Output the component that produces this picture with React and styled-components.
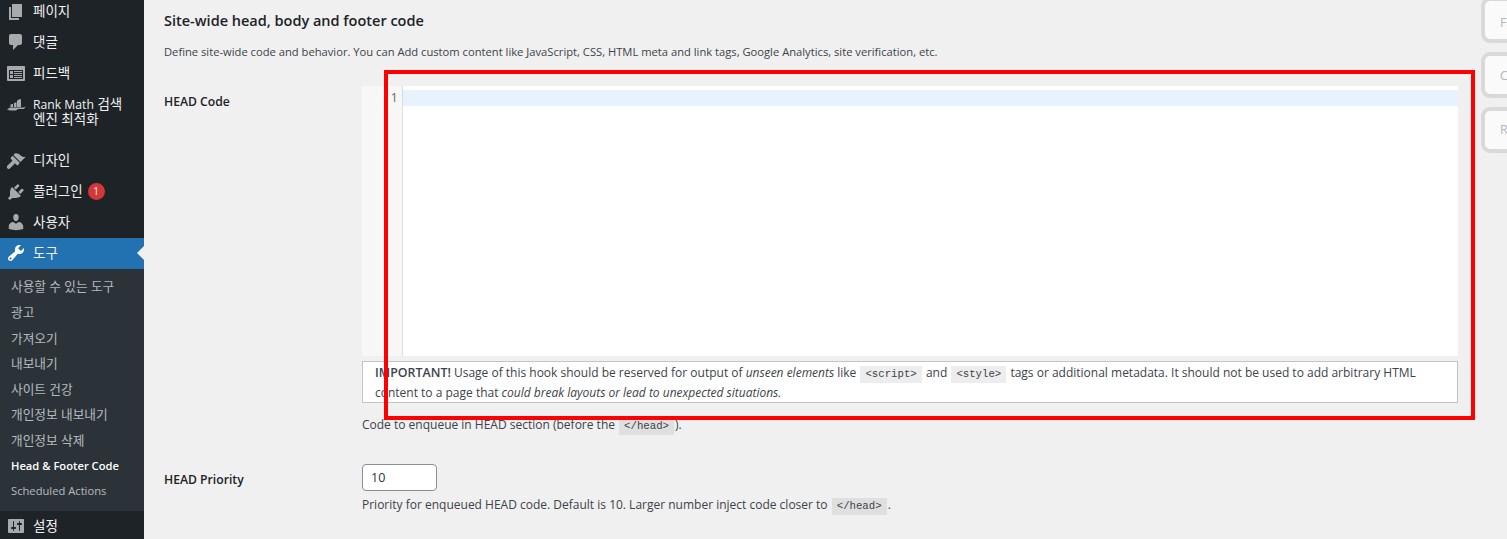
import React from 'react';
import styled, { createGlobalStyle } from 'styled-components';

const GlobalStyle = createGlobalStyle`
    html, body {
        margin: 0;
        padding: 0;
        height: 100%;
        overflow: hidden;
        background: #f0f0f0;
    }
    body {
        font-family: "Open Sans", "Noto Sans CJK KR", sans-serif;
        font-size: 12px;
        color: #3c434a;
    }
`;

const Page = styled.div`
    position: relative;
    display: flex;
    width: 1507px;
    height: 539px;
    overflow: hidden;
`;

const Sidebar = styled.nav`
    flex: 0 0 144px;
    background: #1d2327;
    margin-top: -3.8px;
    height: 544px;
`;

const MenuItem = styled.div`
    position: relative;
    display: flex;
    align-items: ${props => props.tall ? 'flex-start' : 'center'};
    height: ${props => props.tall ? '56.8px' : '30.8px'};
    padding-top: ${props => props.tall ? '8px' : '0'};
    box-sizing: border-box;
    background: ${props => props.active ? '#2271b1' : 'transparent'};
    color: #f0f0f1;
    font-size: 13.5px;
    line-height: 15px;

    svg {
        flex: 0 0 20px;
        width: 20px;
        height: 20px;
        margin-left: 6px;
        margin-right: 7px;
        fill: ${props => props.active ? '#fff' : '#a7aaad'};
    }
`;

const LatinText = styled.span`
    font-size: 12.2px;
`;

const ActiveArrow = styled.span`
    position: absolute;
    right: 0;
    top: 8px;
    border: 7px solid transparent;
    border-left-width: 0;
    border-right-color: #f0f0f0;
`;

const Badge = styled.span`
    display: inline-flex;
    align-items: center;
    justify-content: center;
    width: 17px;
    height: 17px;
    margin-left: 5px;
    border-radius: 50%;
    background: #d63638;
    color: #fff;
    font-size: 10px;
`;

const SubMenu = styled.div`
    background: #2c3338;
    padding: 4.5px 0 7.5px;
`;

const SubItem = styled.div`
    display: flex;
    align-items: center;
    height: 25.6px;
    padding-left: 11px;
    font-size: ${props => props.latin ? '11.2px' : '12.7px'};
    font-weight: ${props => props.current ? 600 : 400};
    color: ${props => props.current ? '#fff' : 'rgba(240, 246, 252, 0.7)'};
    white-space: nowrap;
`;

const Content = styled.main`
    flex: 0 0 1294px;
    margin-left: 20px;
`;

const Heading = styled.h2`
    margin: 11px 0 0;
    font-size: 14.5px;
    line-height: 20px;
    font-weight: 600;
    color: #1d2327;
`;

const Description = styled.p`
    margin: 13px 0 0;
    font-size: 11.2px;
    line-height: 16px;
`;

const FormRow = styled.div`
    display: grid;
    grid-template-columns: 198px 1fr;
    margin-top: ${props => props.gap}px;
`;

const Label = styled.label`
    padding-top: 8px;
    font-size: 12.2px;
    line-height: 16px;
    font-weight: 600;
    color: #1d2327;
`;

const Editor = styled.div`
    display: flex;
    height: 270px;
    background: #fff;
`;

const Gutter = styled.div`
    flex: 0 0 41px;
    box-sizing: border-box;
    padding: 3px 4px 0 0;
    background: #f7f7f7;
    border-right: 1px solid #ddd;
    text-align: right;
    font-size: 13px;
    line-height: 16px;
    color: #6d6d6d;
`;

const Lines = styled.div`
    flex: 1;
    padding-top: 4px;
`;

const ActiveLine = styled.div`
    height: 16px;
    background: #e8f2fe;
`;

const Notice = styled.div`
    box-sizing: border-box;
    height: 42px;
    margin-top: 5px;
    padding: 1px 12px 0;
    background: #fff;
    border: 1.5px solid #c3c4c7;
    font-size: 12px;
    line-height: 19px;
`;

const Strong = styled.strong`
    font-size: 12.4px;
    font-weight: 600;
`;

const Code = styled.code`
    display: inline-block;
    padding: 0 5px;
    margin: 0 1px;
    background: rgba(0, 0, 0, 0.07);
    font-family: "Liberation Mono", monospace;
    font-size: 10.7px;
    line-height: 17px;
    vertical-align: baseline;
`;

const Hint = styled.p`
    margin: ${props => props.gap}px 0 0;
    font-size: 12px;
    line-height: 18px;
`;

const NumberField = styled.input`
    display: block;
    box-sizing: border-box;
    width: 75px;
    height: 27px;
    padding: 0 8px;
    background: #fff;
    border: 1px solid #8c8f94;
    border-radius: 4px;
    font-family: "Open Sans", sans-serif;
    font-size: 12.5px;
    color: #2c3338;
`;

const SideTabs = styled.aside`
    display: flex;
    flex-direction: column;
    flex: none;
    gap: 9px;
    margin: -3px 0 0 23px;
`;

const SideTab = styled.div`
    box-sizing: border-box;
    width: 90px;
    height: 46px;
    padding: ${props => props.pad}px 0 0 15px;
    background: #fafafa;
    border: 4px solid #d9d9d9;
    border-radius: 9px;
    font-size: 12.5px;
    line-height: 20px;
    color: #b5b5b5;
`;

const Highlight = styled.div`
    position: absolute;
    left: 384px;
    top: 70px;
    width: 1091px;
    height: 350px;
    box-sizing: border-box;
    border: 4px solid #ff0000;
    pointer-events: none;
`;

const PageIcon = () => (
    <svg viewBox="0 0 20 20"><path d="M6 15V2h10v13H6zm-1 1h8v2H3V5h2v11z" /></svg>
);

const CommentIcon = () => (
    <svg viewBox="0 0 20 20"><path d="M5 2h9c1.1 0 2 .9 2 2v7c0 1.1-.9 2-2 2h-2l-5 5v-5H5c-1.1 0-2-.9-2-2V4c0-1.1.9-2 2-2z" /></svg>
);

const FeedbackIcon = () => (
    <svg viewBox="0 0 20 20"><path fillRule="evenodd" d="M2 3h16c.55 0 1 .45 1 1v13c0 .55-.45 1-1 1H2c-.55 0-1-.45-1-1V4c0-.55.45-1 1-1zm15 13V7H3v9h14zM4 8v3h3V8H4zm4 0v1h8V8H8zm0 2v1h8v-1H8zm-4 2v3h3v-3H4zm4 0v1h8v-1H8zm0 2v1h8v-1H8z" /></svg>
);

const RankMathIcon = () => (
    <svg viewBox="0 0 20 20"><path d="M1 12.500l3-2h13.500l2-1-1.500 2.500h-6l-2 1.500H4zM4.500 10V7.500L7 6.700V10zM8 10V6l2.500-.8V10zM11 10V3.500L14 2l1 .5V10z" /></svg>
);

const BrushIcon = () => (
    <svg viewBox="0 0 20 20"><path d="M14.48 11.06L7.41 3.99l1.5-1.5c.5-.56 2.3-.47 3.51.32 1.21.8 1.43 1.28 2.91 2.1 1.18.64 2.45 1.26 4.45.85zm-.71.71L6.7 4.7 4.93 6.47c-.39.39-.39 1.02 0 1.41l1.06 1.06c.39.39.39 1.03 0 1.42L1.500 14.500c-.8.9-.8 2.100 0 2.900.8.8 1.800.7 2.600-.1l4.200-4.400c.39-.39 1.020-.39 1.410 0l1.060 1.060c.39.39 1.020.39 1.410 0z" /></svg>
);

const PluginIcon = () => (
    <svg viewBox="0 0 20 20"><path d="M13.11 4.36L9.87 7.6 8 5.73l3.24-3.24c.35-.34 1.05-.2 1.56.32.52.51.66 1.21.31 1.55zm-8 1.77l.91-1.12 9.01 9.01-1.19.84c-.71.71-2.63 1.16-3.82 1.16H6.14L4.9 17.26c-.59.59-1.54.59-2.12 0-.59-.58-.59-1.53 0-2.12l1.24-1.24v-3.88c0-1.13.4-3.19 1.09-3.89zm7.26 3.97l3.24-3.24c.34-.35 1.04-.21 1.55.31.52.51.66 1.21.31 1.55l-3.24 3.25z" /></svg>
);

const UserIcon = () => (
    <svg viewBox="0 0 20 20"><path d="M10 9.25c-2.27 0-2.73-3.44-2.73-3.44C7 4.02 7.82 2 9.97 2c2.160 0 2.980 2.020 2.710 3.810 0 0-.41 3.440-2.680 3.440zm0 2.570L12.720 10c2.390 0 4.520 2.330 4.520 4.530v2.490s-3.650 1.130-7.240 1.130c-3.650 0-7.240-1.130-7.240-1.130v-2.490c0-2.250 1.940-4.480 4.470-4.480z" /></svg>
);

const ToolsIcon = () => (
    <svg viewBox="0 0 20 20"><path d="M16.68 9.77c-1.34 1.34-3.3 1.67-4.95.99l-5.41 6.52c-.99.99-2.59.99-3.58 0s-.99-2.59 0-3.57l6.52-5.42c-.68-1.65-.35-3.61.99-4.95 1.28-1.28 3.12-1.62 4.72-1.06l-2.89 2.89 2.82 2.82 2.86-2.87c.53 1.58.18 3.39-1.08 4.65zM3.81 16.21c.4.39 1.04.39 1.43 0 .4-.4.4-1.04 0-1.43-.39-.4-1.03-.4-1.43 0-.39.39-.39 1.03 0 1.43z" /></svg>
);

const SettingsIcon = () => (
    <svg viewBox="0 0 20 20"><path d="M18 16V4c0-.55-.45-1-1-1H3c-.55 0-1 .45-1 1v12c0 .55.45 1 1 1h14c.55 0 1-.45 1-1zM8 11h1c.55 0 1 .45 1 1s-.45 1-1 1H8v1.500c0 .28-.22.5-.5.5s-.5-.22-.5-.5V13H6c-.55 0-1-.45-1-1s.45-1 1-1h1V5.500c0-.28.22-.5.5-.5s.5.22.5.5V11zm5-2h-1c-.55 0-1-.45-1-1s.45-1 1-1h1V5.500c0-.28.22-.5.5-.5s.5.22.5.5V7h1c.55 0 1 .45 1 1s-.45 1-1 1h-1v5.500c0 .28-.22.5-.5.5s-.5-.22-.5-.5V9z" /></svg>
);

const subItems = [
    '사용할 수 있는 도구',
    '광고',
    '가져오기',
    '내보내기',
    '사이트 건강',
    '개인정보 내보내기',
    '개인정보 삭제',
];

const App = () => (
    <Page>
        <GlobalStyle />
        <Sidebar>
            <MenuItem><PageIcon />페이지</MenuItem>
            <MenuItem><CommentIcon />댓글</MenuItem>
            <MenuItem><FeedbackIcon />피드백</MenuItem>
            <MenuItem tall><RankMathIcon /><span><LatinText>Rank Math</LatinText> 검색<br />엔진 최적화</span></MenuItem>
            <MenuItem><BrushIcon />디자인</MenuItem>
            <MenuItem><PluginIcon />플러그인<Badge>1</Badge></MenuItem>
            <MenuItem><UserIcon />사용자</MenuItem>
            <MenuItem active><ToolsIcon />도구<ActiveArrow /></MenuItem>
            <SubMenu>
                {subItems.map(item => <SubItem key={item}>{item}</SubItem>)}
                <SubItem latin current>Head &amp; Footer Code</SubItem>
                <SubItem latin>Scheduled Actions</SubItem>
            </SubMenu>
            <MenuItem><SettingsIcon />설정</MenuItem>
        </Sidebar>
        <Content>
            <Heading>Site-wide head, body and footer code</Heading>
            <Description>Define site-wide code and behavior. You can Add custom content like JavaScript, CSS, HTML meta and link tags, Google Analytics, site verification, etc.</Description>
            <FormRow gap={26}>
                <Label>HEAD Code</Label>
                <div>
                    <Editor>
                        <Gutter>1</Gutter>
                        <Lines><ActiveLine /></Lines>
                    </Editor>
                    <Notice>
                        <Strong>IMPORTANT!</Strong> Usage of this hook should be reserved for output of <em>unseen elements</em> like <Code>&lt;script&gt;</Code> and <Code>&lt;style&gt;</Code> tags or additional metadata. It should not be used to add arbitrary HTML content to a page that <em>could break layouts or lead to unexpected situations.</em>
                    </Notice>
                    <Hint gap={13}>Code to enqueue in HEAD section (before the <Code>&lt;/head&gt;</Code>).</Hint>
                </div>
            </FormRow>
            <FormRow gap={29}>
                <Label>HEAD Priority</Label>
                <div>
                    <NumberField type="number" defaultValue="10" />
                    <Hint gap={5}>Priority for enqueued HEAD code. Default is 10. Larger number inject code closer to <Code>&lt;/head&gt;</Code>.</Hint>
                </div>
            </FormRow>
        </Content>
        <SideTabs>
            <SideTab pad={12}>Fa</SideTab>
            <SideTab pad={10}>C</SideTab>
            <SideTab pad={9}>R</SideTab>
        </SideTabs>
        <Highlight />
    </Page>
);

export default App;
